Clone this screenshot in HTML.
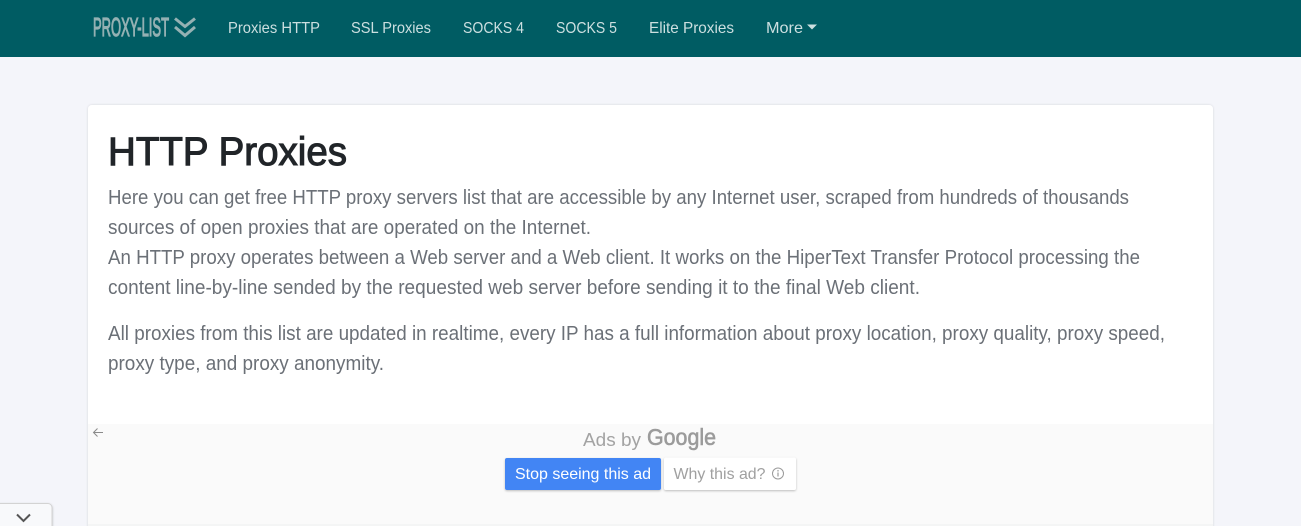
<!DOCTYPE html>
<html lang="en">
<head>
<meta charset="utf-8">
<title>HTTP Proxies</title>
<style>
html,body{margin:0;padding:0;width:1301px;height:526px;overflow:hidden;background:#f4f5fa}
svg{position:absolute;left:0;top:0;display:block}
text{font-family:"Liberation Sans",Arial,sans-serif}
.n{font-size:16px;fill:#ccdfe0}
.p{font-size:20px;fill:#6b7077}
</style>
</head>
<body>
<svg width="1301" height="526" viewBox="0 0 1301 526" xmlns="http://www.w3.org/2000/svg">
<defs>
<filter id="s" x="-10%" y="-10%" width="120%" height="130%"><feDropShadow dx="0" dy="1" stdDeviation="1" flood-color="#000" flood-opacity=".25"/></filter>
<filter id="c" x="-2%" y="-2%" width="104%" height="104%"><feDropShadow dx="0" dy="0" stdDeviation="1" flood-color="#000" flood-opacity=".14"/></filter>
</defs>
<rect width="1301" height="526" fill="#f4f5fa"/>
<rect width="1301" height="57" fill="#005c63"/>
<text x="93" y="36" font-size="26" fill="#94b1b3" stroke="#94b1b3" stroke-width="1.200" textLength="76" lengthAdjust="spacingAndGlyphs">PROXY-LIST</text>
<path d="M175 18.500l10 8 10-8M175 27l10 8.500 10-8.500" fill="none" stroke="#94b1b3" stroke-width="3"/>
<text class="n" x="228" y="33" textLength="92" lengthAdjust="spacingAndGlyphs">Proxies HTTP</text>
<text class="n" x="351" y="33" textLength="80" lengthAdjust="spacingAndGlyphs">SSL Proxies</text>
<text class="n" x="463" y="33" textLength="61" lengthAdjust="spacingAndGlyphs">SOCKS 4</text>
<text class="n" x="556" y="33" textLength="61" lengthAdjust="spacingAndGlyphs">SOCKS 5</text>
<text class="n" x="649" y="33" textLength="85" lengthAdjust="spacingAndGlyphs">Elite Proxies</text>
<text class="n" x="766" y="33" textLength="37" lengthAdjust="spacingAndGlyphs">More</text>
<path d="M807 24.500h10l-5 5z" fill="#ccdfe0"/>

<rect x="88" y="105" width="1125" height="430" rx="4" fill="#fff" filter="url(#c)"/>
<rect x="88" y="424" width="1125" height="100" fill="#fafafa"/>
<rect x="88" y="524" width="1125" height="2" fill="#f4f5f5"/>
<text x="108" y="165" font-size="40" fill="#212529" stroke="#212529" stroke-width="1.100" textLength="239" lengthAdjust="spacingAndGlyphs">HTTP Proxies</text>
<text class="p" x="108" y="204" textLength="1021" lengthAdjust="spacingAndGlyphs">Here you can get free HTTP proxy servers list that are accessible by any Internet user, scraped from hundreds of thousands</text>
<text class="p" x="108" y="234" textLength="483" lengthAdjust="spacingAndGlyphs">sources of open proxies that are operated on the Internet.</text>
<text class="p" x="108" y="264" textLength="1032" lengthAdjust="spacingAndGlyphs">An HTTP proxy operates between a Web server and a Web client. It works on the HiperText Transfer Protocol processing the</text>
<text class="p" x="108" y="294" textLength="812" lengthAdjust="spacingAndGlyphs">content line-by-line sended by the requested web server before sending it to the final Web client.</text>
<text class="p" x="108" y="340" textLength="1057" lengthAdjust="spacingAndGlyphs">All proxies from this list are updated in realtime, every IP has a full information about proxy location, proxy quality, proxy speed,</text>
<text class="p" x="108" y="370" textLength="276" lengthAdjust="spacingAndGlyphs">proxy type, and proxy anonymity.</text>

<path d="M103 432.500h-9.500M97.500 428.500l-4 4 4 4" fill="none" stroke="#8a8a8a" stroke-width="1"/>
<text x="583" y="446" font-size="18" fill="#a3a3a3" textLength="58" lengthAdjust="spacingAndGlyphs">Ads by</text>
<text x="647" y="445" font-size="23" fill="#9b9b9b" stroke="#9b9b9b" stroke-width=".6" textLength="69" lengthAdjust="spacingAndGlyphs">Google</text>
<rect x="505" y="458" width="156" height="32" rx="2" fill="#4285f4" filter="url(#s)"/>
<text x="515" y="479" font-size="16" fill="#fff" textLength="136" lengthAdjust="spacingAndGlyphs">Stop seeing this ad</text>
<rect x="664" y="457.500" width="132" height="32.500" rx="2" fill="#fff" filter="url(#s)"/>
<text x="673.500" y="479" font-size="16" fill="#a0a0a0" textLength="92" lengthAdjust="spacingAndGlyphs">Why this ad?</text>
<circle cx="778" cy="473.500" r="5.500" fill="none" stroke="#9a9a9a" stroke-width="1"/>
<path d="M778 472.500v4M778 470v1.500" stroke="#9a9a9a" stroke-width="1.200" fill="none"/>

<path d="M-2 503.500h50a4 4 0 0 1 4 4V530H-2z" fill="#f8f9fb" stroke="#d3d3d3" stroke-width="1" filter="url(#s)"/>
<path d="M17 514.500l6.500 6.500 6.500-6.500" fill="none" stroke="#555" stroke-width="2"/>
</svg>
</body>
</html>
